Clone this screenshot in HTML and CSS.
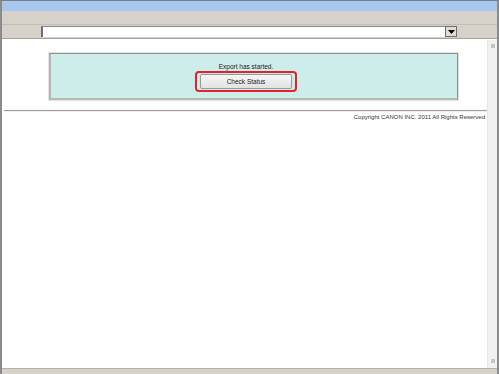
FILE: index.html
```html
<!DOCTYPE html>
<html lang="en">
<head>
  <meta charset="UTF-8">
  <title>Export</title>
  <link rel="stylesheet" href="styles.css">
</head>
<body>
  <div class="window">
    <div class="titlebar"></div>
    <div class="toolbar"></div>
    <div class="addressbar">
      <div class="select">
        <span class="arrow">
          <svg width="7" height="4" viewBox="0 0 7 4"><path d="M0 0H7L3.5 4Z" fill="#000"/></svg>
        </span>
      </div>
    </div>
    <div class="view">
      <div class="page">
        <div class="panel">
          <p class="msg">Export has started.</p>
          <span class="ring"><button class="btn">Check Status</button></span>
        </div>
        <hr class="rule">
        <p class="copy">Copyright CANON INC. 2011 All Rights Reserved</p>
      </div>
      <div class="scroll">
        <span class="grip top"></span>
        <span class="grip bottom"></span>
      </div>
    </div>
    <div class="statusbar"></div>
  </div>
</body>
</html>
```
FILE: styles.css
```css
* {
  box-sizing: border-box;
}
html, body {
  margin: 0;
  height: 100%;
}
body {
  font-family: "Liberation Sans", Arial, sans-serif;
  background: #fff;
}
.window {
  height: 374px;
  display: flex;
  flex-direction: column;
  border-left: 2px solid #8a8a8a;
  border-top: 1px solid #7c7c7c;
  border-right: 2px solid #8a8a8a;
}
.titlebar {
  height: 10px;
  background: #a6c8f0;
}
.toolbar {
  height: 14px;
  background: #d6d2ca;
  border-bottom: 1px solid #c2beb6;
}
.addressbar {
  height: 14px;
  background: #d6d2ca;
  padding: 1px 0 0 39px;
  border-bottom: 1px solid #a8a49c;
}
.select {
  width: 416px;
  height: 11px;
  background: #fff;
  border-left: 2px solid #6f6f6f;
  border-top: 1px solid #8a8a8a;
  display: flex;
  justify-content: flex-end;
}
.arrow {
  width: 12px;
  height: 11px;
  margin-top: -1px;
  background: #e0ddd6;
  border: 1px solid #6c6c6c;
  display: flex;
  align-items: center;
  justify-content: center;
}
.view {
  flex: 1;
  display: flex;
  border-top: 1px solid #fff;
}
.page {
  flex: 1;
  padding: 13px 0 0 2px;
}
.panel {
  margin: 0 29px 0 45px;
  padding-right: 16px;
  height: 47px;
  background: #cdedeb;
  border: 1px solid #8e8e8e;
  border-left: 2px solid #b4b4b4;
  border-bottom: 2px solid #b8b8b8;
  box-shadow: 0 0 0 1px #e2e2e2;
  display: flex;
  flex-direction: column;
  align-items: center;
}
.msg {
  margin: 9px 0 0;
  font-size: 6.5px;
  line-height: 8px;
  color: #222;
}
.ring {
  margin-top: 0;
  padding: 1px 3px;
  border: 2px solid #e8202a;
  border-radius: 4px;
}
.btn {
  display: block;
  width: 92px;
  height: 15px;
  padding: 0;
  font-family: inherit;
  font-size: 6.5px;
  color: #222;
  background: linear-gradient(#f6f6f6, #e2e2e2);
  border: 1px solid #9a9a9a;
  border-radius: 2px;
}
.rule {
  margin: 10px 0 0;
  border: none;
  border-top: 1px solid #9c9c9c;
  border-bottom: 1px solid #f0f0f0;
}
.copy {
  margin: 2px 2px 0 0;
  text-align: right;
  font-size: 6px;
  color: #333;
}
.scroll {
  width: 10px;
  background: #f1f1f1;
  border-left: 1px solid #e6e6e6;
  display: flex;
  flex-direction: column;
  justify-content: space-between;
  align-items: center;
  padding: 4px 0 5px;
}
.grip {
  width: 4px;
  height: 4px;
  background: #c4c4c4;
}
.statusbar {
  height: 6px;
  background: #d6d2ca;
  border-top: 1px solid #b5b1a9;
}
```
